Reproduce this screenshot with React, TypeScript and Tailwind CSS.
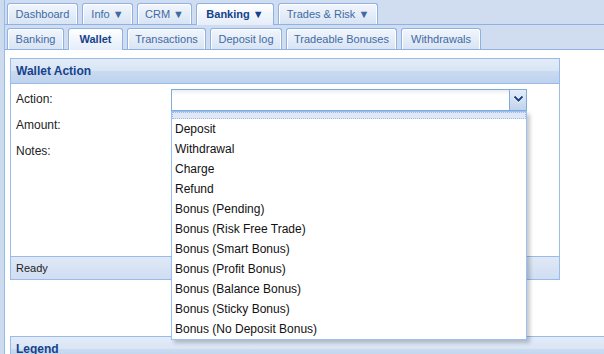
import React from 'react';

const FONT = { fontFamily: '"Liberation Sans", "DejaVu Sans", Arial, sans-serif' };

const topTabs = [
  { label: 'Dashboard', w: 'w-[71px]' },
  { label: 'Info ▼', w: 'w-[51px]' },
  { label: 'CRM ▼', w: 'w-[55px]' },
  { label: 'Banking ▼', w: 'w-[78px]', active: true },
  { label: 'Trades & Risk ▼', w: 'w-[100px]' },
];

const subTabs = [
  { label: 'Banking', w: 'w-[57px]' },
  { label: 'Wallet', w: 'w-[55px]', active: true },
  { label: 'Transactions', w: 'w-[79px]' },
  { label: 'Deposit log', w: 'w-[72px]' },
  { label: 'Tradeable Bonuses', w: 'w-[111px]' },
  { label: 'Withdrawals', w: 'w-[80px]' },
];

const actions = [
  'Deposit',
  'Withdrawal',
  'Charge',
  'Refund',
  'Bonus (Pending)',
  'Bonus (Risk Free Trade)',
  'Bonus (Smart Bonus)',
  'Bonus (Profit Bonus)',
  'Bonus (Balance Bonus)',
  'Bonus (Sticky Bonus)',
  'Bonus (No Deposit Bonus)',
];

function Tab({ label, w, active }: { label: string; w: string; active?: boolean }) {
  if (active) {
    return (
      <div
        className={`${w} relative z-10 -mb-px flex h-[22px] items-center justify-center rounded-t-[3px] border border-b-0 border-[#8db2e3] bg-[linear-gradient(#ffffff,#e4edf9)] pb-px text-[11px] font-bold text-[#15428b] shadow-[inset_1px_1px_0_#ffffff]`}
      >
        {label}
      </div>
    );
  }
  return (
    <div
      className={`${w} flex h-[21px] items-center justify-center rounded-t-[3px] border border-b-0 border-[#8db2e3] bg-[linear-gradient(#f2f6fc,#d8e4f4)] text-[11px] text-[#416aa3] shadow-[inset_1px_1px_0_#ffffff,inset_-1px_0_0_#ffffff]`}
    >
      {label}
    </div>
  );
}

function TabStrip({ tabs }: { tabs: { label: string; w: string; active?: boolean }[] }) {
  return (
    <div className="flex h-[25px] shrink-0 items-end gap-[4px] border-b border-[#8db2e3] bg-[#d0ddf0] pl-[2px]">
      {tabs.map((t) => (
        <Tab key={t.label} {...t} />
      ))}
    </div>
  );
}

function PanelHeader({ title }: { title: string }) {
  return (
    <div className="flex h-[25px] shrink-0 items-center border-b border-[#99bbe8] bg-[linear-gradient(#e3ecf8_0%,#d9e5f5_48%,#c9daf1_52%,#bfd2ed_100%)] pl-[5px] text-[12px] font-bold text-[#15428b]">
      {title}
    </div>
  );
}

export default function App() {
  return (
    <div className="flex h-screen w-full overflow-hidden bg-white" style={FONT}>
      {/* left edge strip */}
      <div className="w-[5px] shrink-0 border-r border-[#99bbe8] bg-[#cddbef]" />

      <div className="flex min-w-0 flex-1 flex-col">
        <TabStrip tabs={topTabs} />
        <TabStrip tabs={subTabs} />

        <div className="flex shrink-0 flex-col pl-[5px] pt-[8px]">
          {/* Wallet Action panel */}
          <div className="w-[550px] shrink-0 border border-[#99bbe8] bg-white">
            <PanelHeader title="Wallet Action" />

            <div className="flex h-[172px] flex-col gap-[4px] px-[5px] pt-[5px] text-[12px] text-[#222]">
              <div className="flex items-start">
                <div className="w-[155px] pt-[1px]">Action:</div>
                <div className="relative z-20">
                  <div className="flex h-[22px] w-[356px] border border-[#7eadd9] bg-[linear-gradient(#eceeee,#ffffff_5px)]">
                    <div className="flex-1" />
                    <div className="flex w-[17px] items-start justify-center border-l border-[#7eadd9] bg-[linear-gradient(#e4edf9,#c0d3ec)] pt-[5px]">
                      <svg width="11" height="8" viewBox="0 0 11 8">
                        <polyline points="1.5,1.5 5.5,5.5 9.5,1.5" fill="none" stroke="#ffffff" strokeWidth="3.5" />
                        <polyline points="1.5,1.5 5.5,5.5 9.5,1.5" fill="none" stroke="#15428b" strokeWidth="2" />
                      </svg>
                    </div>
                  </div>

                  {/* open combo list */}
                  <div className="absolute left-0 top-[22px] w-[356px] border border-[#98c0f4] bg-white shadow-[3px_3px_4px_rgba(0,0,0,0.22)]">
                    <div className="h-[7px] border border-dotted border-[#a3bae9] bg-[#dfe8f6]" />
                    {actions.map((a) => (
                      <div key={a} className="h-[20px] pl-[3px] text-[12px] leading-[20px] text-[#111]">
                        {a}
                      </div>
                    ))}
                  </div>
                </div>
              </div>

              <div className="flex items-start">
                <div className="w-[155px] pt-[1px]">Amount:</div>
                <div className="h-[22px] w-[356px] border border-[#b5b8c8] bg-white" />
              </div>

              <div className="flex items-start">
                <div className="w-[155px] pt-[1px]">Notes:</div>
                <div className="h-[80px] w-[356px] border border-[#b5b8c8] bg-white" />
              </div>
            </div>

            <div className="flex h-[23px] items-center border-t border-[#99bbe8] bg-[linear-gradient(#dfe8f6,#d0def2)] pl-[5px] text-[11px] text-[#222]">
              Ready
            </div>
          </div>

          {/* Legend panel */}
          <div className="mt-[56px] shrink-0 border-l border-t border-[#99bbe8]">
            <PanelHeader title="Legend" />
          </div>
        </div>
      </div>
    </div>
  );
}
